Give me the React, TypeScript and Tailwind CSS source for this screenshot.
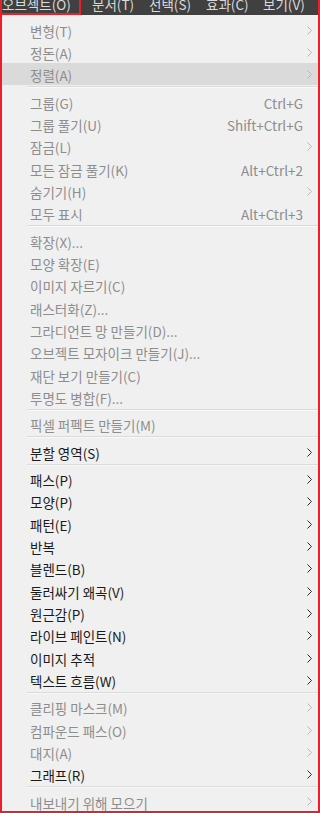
import { ReactNode } from "react";

type Item =
  | { sep: true }
  | { label: string; shortcut?: string; sub?: boolean; on?: boolean; hover?: boolean };

const items: Item[] = [
  { label: "변형(T)", sub: true },
  { label: "정돈(A)", sub: true },
  { label: "정렬(A)", sub: true, hover: true },
  { sep: true },
  { label: "그룹(G)", shortcut: "Ctrl+G" },
  { label: "그룹 풀기(U)", shortcut: "Shift+Ctrl+G" },
  { label: "잠금(L)", sub: true },
  { label: "모든 잠금 풀기(K)", shortcut: "Alt+Ctrl+2" },
  { label: "숨기기(H)", sub: true },
  { label: "모두 표시", shortcut: "Alt+Ctrl+3" },
  { sep: true },
  { label: "확장(X)..." },
  { label: "모양 확장(E)" },
  { label: "이미지 자르기(C)" },
  { label: "래스터화(Z)..." },
  { label: "그라디언트 망 만들기(D)..." },
  { label: "오브젝트 모자이크 만들기(J)..." },
  { label: "재단 보기 만들기(C)" },
  { label: "투명도 병합(F)..." },
  { sep: true },
  { label: "픽셀 퍼펙트 만들기(M)" },
  { sep: true },
  { label: "분할 영역(S)", sub: true, on: true },
  { sep: true },
  { label: "패스(P)", sub: true, on: true },
  { label: "모양(P)", sub: true, on: true },
  { label: "패턴(E)", sub: true, on: true },
  { label: "반복", sub: true, on: true },
  { label: "블렌드(B)", sub: true, on: true },
  { label: "둘러싸기 왜곡(V)", sub: true, on: true },
  { label: "원근감(P)", sub: true, on: true },
  { label: "라이브 페인트(N)", sub: true, on: true },
  { label: "이미지 추적", sub: true, on: true },
  { label: "텍스트 흐름(W)", sub: true, on: true },
  { sep: true },
  { label: "클리핑 마스크(M)", sub: true },
  { label: "컴파운드 패스(O)", sub: true },
  { label: "대지(A)", sub: true },
  { label: "그래프(R)", sub: true, on: true },
  { sep: true },
  { label: "내보내기 위해 모으기", sub: true },
];

function Chevron({ on }: { on?: boolean }) {
  return (
    <svg width="5" height="9" viewBox="0 0 5 9" className="block">
      <path d="M0.5 0.5 L4.5 4.5 L0.5 8.5" fill="none" stroke={on ? "#2a2a2a" : "#b8b8b8"} strokeWidth="1" />
    </svg>
  );
}

function TopItem({ children, active }: { children: ReactNode; active?: boolean }) {
  return (
    <div
      className={
        active
          ? "h-[15px] w-[79px] border-r-2 border-b-2 border-[#ec1f28]"
          : "h-[15px] w-[57px] pl-[7px]"
      }
    >
      <div className="-mt-[6px] h-[21px] leading-[21px] whitespace-nowrap">{children}</div>
    </div>
  );
}

export default function App() {
  return (
    <div
      className="w-[320px] h-[813px] bg-[#f0f0f0] border-x-2 border-b-2 border-[#ec1f28] overflow-hidden text-[13.5px]"
      style={{ fontFamily: '"Noto Sans CJK KR", "Noto Sans", sans-serif' }}
    >
      <div className="flex h-[15px] bg-[#404040] text-[#dadada] overflow-hidden">
        <TopItem active>오브젝트(O)</TopItem>
        <div className="ml-[4px] flex">
          <TopItem>문서(T)</TopItem>
          <TopItem>선택(S)</TopItem>
          <TopItem>효과(C)</TopItem>
          <TopItem>보기(V)</TopItem>
        </div>
      </div>

      <div className="pt-[3px]">
        {items.map((it, i) =>
          "sep" in it ? (
            <div key={i} className="h-[5px] flex flex-col justify-center pl-[25px]">
              <div className="h-px bg-[#dbdbdb]" />
              <div className="h-px bg-[#f8f8f8]" />
            </div>
          ) : (
            <div
              key={i}
              className={`h-[22.33px] flex items-center pl-[28px] ${it.hover ? "bg-[#dadada]" : ""} ${
                it.on ? "text-[#1a1a1a]" : "text-[#8d8d8d]"
              }`}
            >
              <span className="flex-1 whitespace-nowrap leading-[22px] pt-[3px]">{it.label}</span>
              {it.shortcut && <span className="whitespace-nowrap leading-[22px] pt-[3px]">{it.shortcut}</span>}
              <div className="w-[15px] h-full flex items-center justify-end pr-[6px] pt-[2px]">
                {it.sub && <Chevron on={it.on} />}
              </div>
            </div>
          )
        )}
      </div>
    </div>
  );
}
